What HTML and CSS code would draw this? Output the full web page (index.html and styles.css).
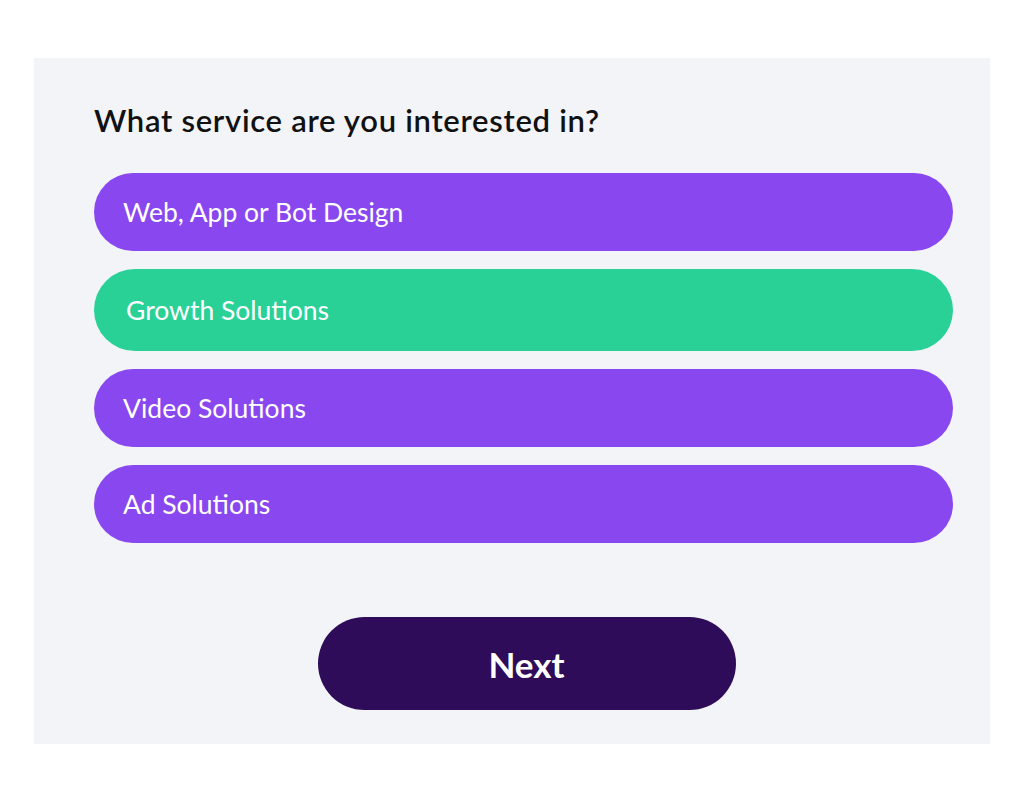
FILE: index.html
```html
<!DOCTYPE html>
<html lang="en">
<head>
  <meta charset="UTF-8">
  <title>Service Picker</title>
  <link rel="stylesheet" href="styles.css">
</head>
<body>
  <div class="panel">
    <h2 class="question">What service are you interested in?</h2>

    <div class="options">
      <button class="option">Web, App or Bot Design</button>
      <button class="option selected">Growth Solutions</button>
      <button class="option">Video Solutions</button>
      <button class="option">Ad Solutions</button>
    </div>

    <div class="actions">
      <button class="next">Next</button>
    </div>
  </div>
</body>
</html>
```

FILE: styles.css
```css
body {
  margin: 0;
  background: #ffffff;
  font-family: Lato, "Open Sans", sans-serif;
}

.panel {
  margin: 58px 34px 0 34px;
  height: 686px;
  box-sizing: border-box;
  padding: 42px 37px 33px 60px;
  background: #f3f4f7;
}

.question {
  margin: 0 0 33px 0;
  font-size: 31px;
  font-weight: 600;
  letter-spacing: 0.7px;
  color: #111111;
  line-height: 40px;
}

.options {
  display: flex;
  flex-direction: column;
  gap: 18px;
}

.option {
  height: 78px;
  padding: 0 29px;
  border: none;
  border-radius: 39px;
  background: #8948ef;
  color: #ffffff;
  font-family: Lato, "Open Sans", sans-serif;
  font-size: 26.5px;
  text-align: left;
  cursor: pointer;
}

.option.selected {
  height: 82px;
  border-radius: 41px;
  padding-left: 32px;
  background: #2ad197;
}

.actions {
  display: flex;
  justify-content: center;
  margin-top: 74px;
  padding-left: 6px;
}

.next {
  width: 418px;
  height: 93px;
  border: none;
  border-radius: 47px;
  background: #2f0c5a;
  color: #ffffff;
  font-family: Lato, "Open Sans", sans-serif;
  font-size: 35px;
  font-weight: 700;
  cursor: pointer;
}
```
